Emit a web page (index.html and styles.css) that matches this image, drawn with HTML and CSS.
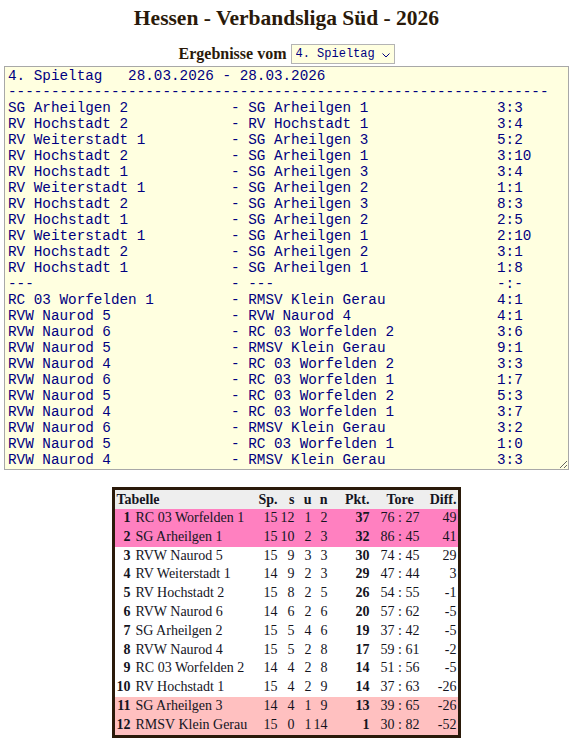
FILE: index.html
```html
<!DOCTYPE html>
<html lang="de">
<head>
<meta charset="utf-8">
<title>Hessen - Verbandsliga Süd - 2026</title>
<link rel="stylesheet" href="styles.css">
</head>
<body>
<div class="page">
  <h1 class="title">Hessen - Verbandsliga Süd - 2026</h1>
  <form class="picker">
    <label class="picker-label" for="spieltag">Ergebnisse vom</label>
    <span class="select-wrap">
      <select id="spieltag" class="select">
        <option>4. Spieltag</option>
      </select>
      <svg class="chevron" width="8" height="5" viewBox="0 0 8 5"><path d="M0.5 0.5 L4 4 L7.5 0.5" fill="none" stroke="#000080" stroke-width="1"/></svg>
    </span>
  </form>
  <textarea class="results" readonly wrap="off" spellcheck="false">4. Spieltag   28.03.2026 - 28.03.2026
---------------------------------------------------------------
SG Arheilgen 2            - SG Arheilgen 1               3:3
RV Hochstadt 2            - RV Hochstadt 1               3:4
RV Weiterstadt 1          - SG Arheilgen 3               5:2
RV Hochstadt 2            - SG Arheilgen 1               3:10
RV Hochstadt 1            - SG Arheilgen 3               3:4
RV Weiterstadt 1          - SG Arheilgen 2               1:1
RV Hochstadt 2            - SG Arheilgen 3               8:3
RV Hochstadt 1            - SG Arheilgen 2               2:5
RV Weiterstadt 1          - SG Arheilgen 1               2:10
RV Hochstadt 2            - SG Arheilgen 2               3:1
RV Hochstadt 1            - SG Arheilgen 1               1:8
---                       - ---                          -:-
RC 03 Worfelden 1         - RMSV Klein Gerau             4:1
RVW Naurod 5              - RVW Naurod 4                 4:1
RVW Naurod 6              - RC 03 Worfelden 2            3:6
RVW Naurod 5              - RMSV Klein Gerau             9:1
RVW Naurod 4              - RC 03 Worfelden 2            3:3
RVW Naurod 6              - RC 03 Worfelden 1            1:7
RVW Naurod 5              - RC 03 Worfelden 2            5:3
RVW Naurod 4              - RC 03 Worfelden 1            3:7
RVW Naurod 6              - RMSV Klein Gerau             3:2
RVW Naurod 5              - RC 03 Worfelden 1            1:0
RVW Naurod 4              - RMSV Klein Gerau             3:3</textarea>
  <table class="standings">
    <colgroup>
      <col class="c-rank"><col class="c-name"><col class="c-sp"><col class="c-s"><col class="c-u"><col class="c-n"><col class="c-pkt"><col class="c-tore"><col class="c-diff">
    </colgroup>
    <thead>
      <tr><th colspan="2" class="l">Tabelle</th><th>Sp.</th><th>s</th><th>u</th><th>n</th><th>Pkt.</th><th class="c">Tore</th><th>Diff.</th></tr>
    </thead>
    <tbody>
      <tr class="up"><td class="rank">1</td><td class="name">RC 03 Worfelden 1</td><td>15</td><td>12</td><td>1</td><td>2</td><td class="pkt">37</td><td class="c">76 : 27</td><td>49</td></tr>
      <tr class="up"><td class="rank">2</td><td class="name">SG Arheilgen 1</td><td>15</td><td>10</td><td>2</td><td>3</td><td class="pkt">32</td><td class="c">86 : 45</td><td>41</td></tr>
      <tr><td class="rank">3</td><td class="name">RVW Naurod 5</td><td>15</td><td>9</td><td>3</td><td>3</td><td class="pkt">30</td><td class="c">74 : 45</td><td>29</td></tr>
      <tr><td class="rank">4</td><td class="name">RV Weiterstadt 1</td><td>14</td><td>9</td><td>2</td><td>3</td><td class="pkt">29</td><td class="c">47 : 44</td><td>3</td></tr>
      <tr><td class="rank">5</td><td class="name">RV Hochstadt 2</td><td>15</td><td>8</td><td>2</td><td>5</td><td class="pkt">26</td><td class="c">54 : 55</td><td>-1</td></tr>
      <tr><td class="rank">6</td><td class="name">RVW Naurod 6</td><td>14</td><td>6</td><td>2</td><td>6</td><td class="pkt">20</td><td class="c">57 : 62</td><td>-5</td></tr>
      <tr><td class="rank">7</td><td class="name">SG Arheilgen 2</td><td>15</td><td>5</td><td>4</td><td>6</td><td class="pkt">19</td><td class="c">37 : 42</td><td>-5</td></tr>
      <tr><td class="rank">8</td><td class="name">RVW Naurod 4</td><td>15</td><td>5</td><td>2</td><td>8</td><td class="pkt">17</td><td class="c">59 : 61</td><td>-2</td></tr>
      <tr><td class="rank">9</td><td class="name">RC 03 Worfelden 2</td><td>14</td><td>4</td><td>2</td><td>8</td><td class="pkt">14</td><td class="c">51 : 56</td><td>-5</td></tr>
      <tr><td class="rank">10</td><td class="name">RV Hochstadt 1</td><td>15</td><td>4</td><td>2</td><td>9</td><td class="pkt">14</td><td class="c">37 : 63</td><td>-26</td></tr>
      <tr class="down"><td class="rank">11</td><td class="name">SG Arheilgen 3</td><td>14</td><td>4</td><td>1</td><td>9</td><td class="pkt">13</td><td class="c">39 : 65</td><td>-26</td></tr>
      <tr class="down"><td class="rank">12</td><td class="name">RMSV Klein Gerau</td><td>15</td><td>0</td><td>1</td><td>14</td><td class="pkt">1</td><td class="c">30 : 82</td><td>-52</td></tr>
    </tbody>
  </table>
</div>
</body>
</html>
```
FILE: styles.css
```css
html, body {
  margin: 0;
  padding: 0;
  background: #ffffff;
}

body {
  font-family: "Liberation Serif", "Times New Roman", serif;
  color: #2a1a0a;
}

.page {
  width: 565px;
  margin: 0 0 0 4px;
  display: flex;
  flex-direction: column;
  align-items: center;
}

.title {
  margin: 5px 0 0;
  font-size: 21.5px;
  line-height: 26px;
  font-weight: bold;
  color: #2a1a0a;
}

.picker {
  margin: 12px 0 0;
  height: 21px;
  display: flex;
  align-items: center;
  gap: 4px;
}

.picker-label {
  font-size: 16px;
  font-weight: bold;
  line-height: 20px;
  color: #2a1a0a;
}

.select-wrap {
  position: relative;
  display: inline-flex;
}

.select {
  appearance: none;
  -webkit-appearance: none;
  width: 104px;
  height: 20px;
  margin: 0;
  padding: 0 0 0 4px;
  border: 1px solid #b4b4b4;
  border-radius: 0;
  background: #ffffe0;
  color: #000080;
  font-family: "Liberation Mono", "Courier New", monospace;
  font-size: 12px;
  line-height: 18px;
}

.chevron {
  position: absolute;
  left: 91px;
  top: 9px;
  pointer-events: none;
}

.results {
  box-sizing: border-box;
  width: 565px;
  height: 404px;
  margin: 2px 0 0;
  padding: 1px 3px 1px;
  border: 1px solid #a8a8a8;
  background: #ffffe0;
  color: #000080;
  font-family: "Liberation Mono", "Courier New", monospace;
  font-size: 14.3px;
  line-height: 16px;
  white-space: pre;
  overflow: hidden;
  resize: both;
  outline: none;
}

.standings {
  margin: 17px 0 0;
  border: 3px solid #2a1a0a;
  border-collapse: separate;
  border-spacing: 0;
  table-layout: fixed;
  width: 348px;
  font-size: 14px;
  color: #14141e;
}

.c-rank { width: 16px; }
.c-name { width: 126px; }
.c-sp { width: 21px; }
.c-s { width: 17px; }
.c-u { width: 17px; }
.c-n { width: 16px; }
.c-pkt { width: 42px; }
.c-tore { width: 59px; }
.c-diff { width: 28px; }

.standings th,
.standings td {
  padding: 1px 1px 1px 0;
  text-align: right;
  white-space: nowrap;
  line-height: 16.8px;
}

.standings th {
  background: #eeeeee;
  font-weight: bold;
  line-height: 17px;
  color: #14141e;
}

.standings .l {
  text-align: left;
  padding-left: 1px;
}

.standings .c {
  text-align: center;
  padding-right: 0;
}

.standings .rank {
  font-weight: bold;
}

.standings .name {
  text-align: left;
  padding-left: 4px;
}

.standings .pkt {
  font-weight: bold;
}

.standings tr.up td {
  background: #ff80c0;
}

.standings tr.down td {
  background: #ffc0c0;
}
```
